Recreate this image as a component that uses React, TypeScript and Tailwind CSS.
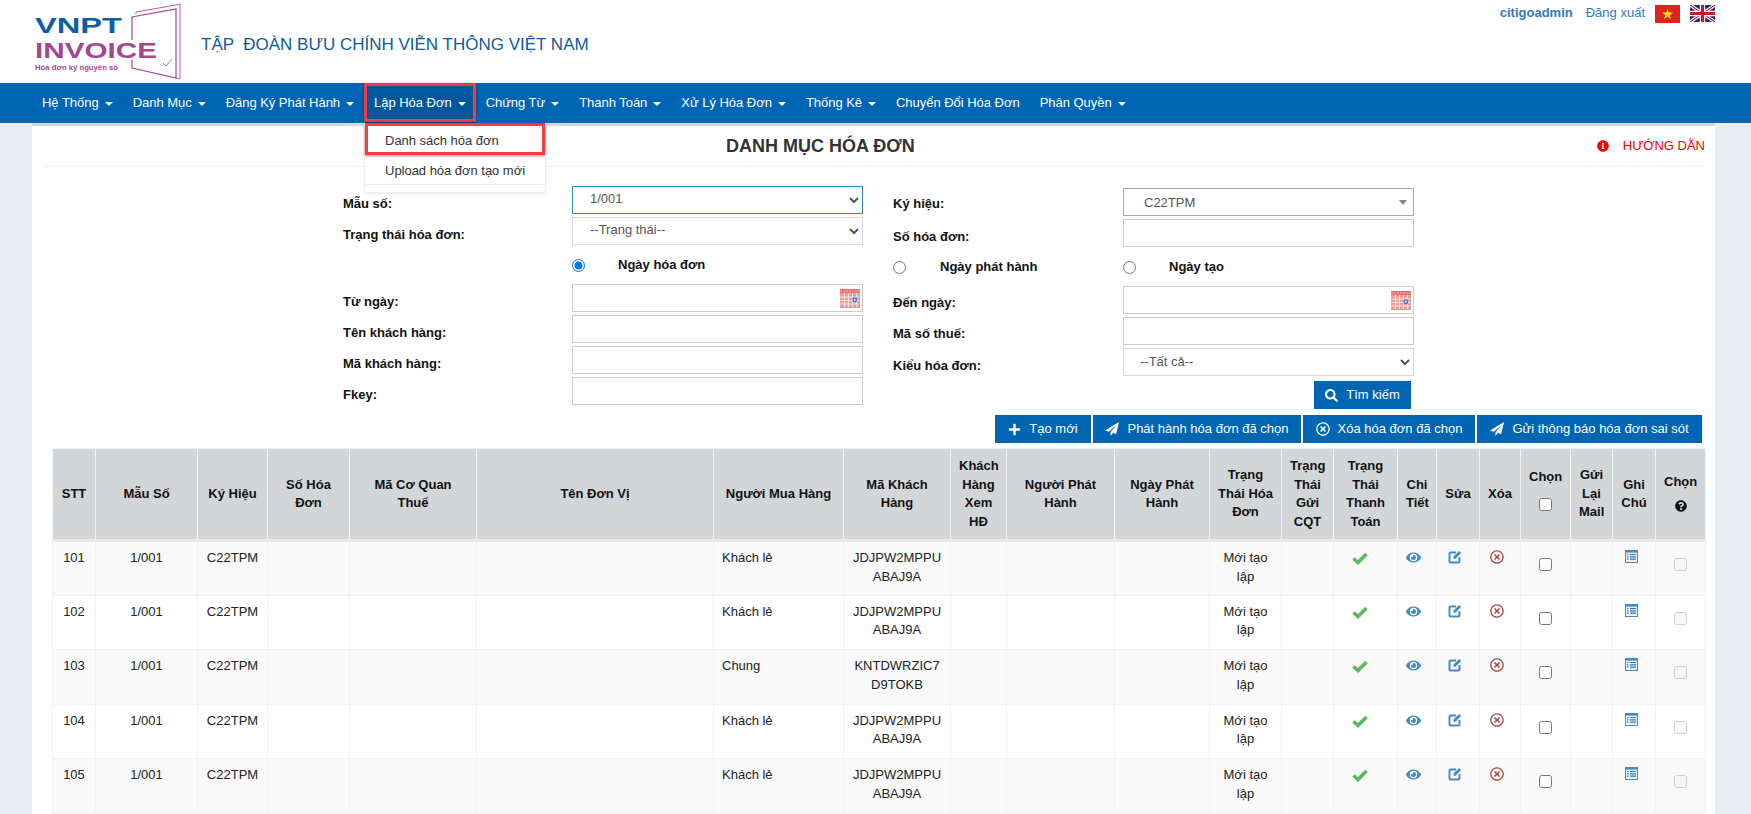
import { FaEye, FaInfoCircle, FaPlus, FaQuestionCircle, FaRegTimesCircle, FaSearch } from "react-icons/fa";

const menus = [
  { label: "Hệ Thống", caret: true },
  { label: "Danh Mục", caret: true },
  { label: "Đăng Ký Phát Hành", caret: true },
  { label: "Lập Hóa Đơn", caret: true, active: true },
  { label: "Chứng Từ", caret: true },
  { label: "Thanh Toán", caret: true },
  { label: "Xử Lý Hóa Đơn", caret: true },
  { label: "Thống Kê", caret: true },
  { label: "Chuyển Đổi Hóa Đơn", caret: false },
  { label: "Phân Quyền", caret: true },
];

const columns = [
  { w: "w-[43px]", label: "STT" },
  { w: "w-[102px]", label: "Mẫu Số" },
  { w: "w-[70px]", label: "Ký Hiệu" },
  { w: "w-[82px]", label: "Số Hóa Đơn" },
  { w: "w-[127px]", label: "Mã Cơ Quan Thuế" },
  { w: "w-[237px]", label: "Tên Đơn Vị" },
  { w: "w-[130px]", label: "Người Mua Hàng" },
  { w: "w-[107px]", label: "Mã Khách Hàng" },
  { w: "w-[56px]", label: "Khách Hàng Xem HĐ" },
  { w: "w-[108px]", label: "Người Phát Hành" },
  { w: "w-[95px]", label: "Ngày Phát Hành" },
  { w: "w-[72px]", label: "Trạng Thái Hóa Đơn" },
  { w: "w-[52px]", label: "Trạng Thái Gửi CQT" },
  { w: "w-[64px]", label: "Trạng Thái Thanh Toán" },
  { w: "w-[39px]", label: "Chi Tiết" },
  { w: "w-[43px]", label: "Sửa" },
  { w: "w-[41px]", label: "Xóa" },
  { w: "w-[50px]", label: "Chọn" },
  { w: "w-[42px]", label: "Gửi Lại Mail" },
  { w: "w-[43px]", label: "Ghi Chú" },
  { w: "w-[50px]", label: "Chọn" },
];

const rows = [
  { stt: 101, buyer: "Khách lẻ", code: "JDJPW2MPPUABAJ9A" },
  { stt: 102, buyer: "Khách lẻ", code: "JDJPW2MPPUABAJ9A" },
  { stt: 103, buyer: "Chung", code: "KNTDWRZIC7D9TOKB" },
  { stt: 104, buyer: "Khách lẻ", code: "JDJPW2MPPUABAJ9A" },
  { stt: 105, buyer: "Khách lẻ", code: "JDJPW2MPPUABAJ9A" },
];

function Logo() {
  return (
    <svg width="160" height="83" viewBox="0 0 160 83" className="ml-[30px] shrink-0">
      <g transform="translate(-30 0)">
        <polyline points="136,14 136,12 176,5 180,4 180,79 176,78" fill="none" stroke="#b0609f" strokeWidth="1" />
        <polyline points="132,40 132,17 176,9 176,78 132,68 132,60" fill="none" stroke="#a4478c" strokeWidth="1.2" />
        <path d="M163 63l3 3 6-7" fill="none" stroke="#3f8fd0" strokeWidth="0.9" />
        <text x="35" y="33" fontSize="22" fontWeight="700" fill="#0b5ea8" textLength="87" lengthAdjust="spacingAndGlyphs" fontFamily="Liberation Sans">VNPT</text>
        <text x="35" y="58" fontSize="22" fontWeight="700" fill="#a4478c" textLength="122" lengthAdjust="spacingAndGlyphs" fontFamily="Liberation Sans">INVOICE</text>
        <text x="35" y="70" fontSize="7.5" fontWeight="700" fill="#a4478c" textLength="83" lengthAdjust="spacingAndGlyphs" fontFamily="Liberation Sans">Hóa đơn kỳ nguyên số</text>
      </g>
    </svg>
  );
}

function FlagVn() {
  return (
    <svg width="25" height="18" viewBox="0 0 25 18">
      <rect width="25" height="18" fill="#e2201c" />
      <polygon points="12.5,3.5 13.9,7.6 18.2,7.6 14.7,10.2 16,14.3 12.5,11.8 9,14.3 10.3,10.2 6.8,7.6 11.1,7.6" fill="#ffe500" />
    </svg>
  );
}

function FlagUk() {
  return (
    <svg width="25" height="17" viewBox="0 0 25 17">
      <rect width="25" height="17" fill="#1f2a6b" />
      <path d="M0 0L25 17M25 0L0 17" stroke="#fff" strokeWidth="3.4" />
      <path d="M0 0L25 17M25 0L0 17" stroke="#cf142b" strokeWidth="1.1" />
      <path d="M12.5 0V17M0 8.5H25" stroke="#fff" strokeWidth="5.4" />
      <path d="M12.5 0V17M0 8.5H25" stroke="#cf142b" strokeWidth="3" />
    </svg>
  );
}

function CalendarIcon() {
  return (
    <svg width="20" height="19" viewBox="0 0 20 19" className="absolute right-[2px] top-[4px]">
      <rect width="20" height="19" fill="#f29a94" />
      <rect width="20" height="4" fill="#e0706a" />
      <path d="M1 1.5V3M4 1.5V3M7 1.5V3M10 1.5V3M13 1.5V3M16 1.5V3M19 1.5V3" stroke="#f7d5d2" strokeWidth="1" />
      <path d="M0 8H20M0 11.5H20M0 15H20M4.5 4V19M8.5 4V19M12.5 4V19M16.5 4V19" stroke="#fbe4e2" strokeWidth="1.2" />
      <rect x="12.5" y="8.5" width="4.5" height="4.5" fill="#4d7fd0" />
      <rect x="14" y="10" width="1.6" height="1.6" fill="#cfe0f7" />
      <path d="M0 18.5H20M19.5 4V19" stroke="#b7a9a6" strokeWidth="1" />
    </svg>
  );
}

function SendIcon() {
  return (
    <svg width="14" height="14" viewBox="0 0 14 14" fill="currentColor">
      <path d="M14 0L0 8.6l3.9 1.2L12.2 2.4 5.5 10.3v3.7l2.3-3 3.4 1z" />
    </svg>
  );
}

function CheckIcon() {
  return (
    <svg width="16" height="13" viewBox="0 0 16 13" className="ml-[10px] mt-[3px]">
      <path d="M1.5 6.5l4.5 4L14.5 2" fill="none" stroke="#5cb85c" strokeWidth="3.6" />
    </svg>
  );
}

function EditIcon() {
  return (
    <svg width="14" height="14" viewBox="0 0 14 14" className="ml-[3px] mt-[1px]">
      <path d="M8 2.5H2.5a1 1 0 0 0-1 1v8a1 1 0 0 0 1 1h8a1 1 0 0 0 1-1V7" fill="none" stroke="#428bca" strokeWidth="1.9" />
      <path d="M5.5 8.8V6.6l5.6-5.6 2 2-5.6 5.8z" fill="#428bca" />
    </svg>
  );
}

function ListIcon() {
  return (
    <svg width="13" height="13" viewBox="0 0 13 13" className="ml-[4px] mt-[1px]">
      <rect x="0.5" y="0.5" width="12" height="12" fill="#eaf3fa" stroke="#428bca" />
      <rect x="1" y="1" width="11" height="1.6" fill="#428bca" />
      <path d="M2 4.5H3.5M5 4.5H11M2 6.8H3.5M5 6.8H11M2 9.1H3.5M5 9.1H11" stroke="#2f77b5" strokeWidth="1.2" />
    </svg>
  );
}

function Field({ calendar }: { calendar?: boolean }) {
  return (
    <div className="relative h-[28px] w-[291px] border border-[#ccc] bg-white">
      {calendar && <CalendarIcon />}
    </div>
  );
}

function Select({ value, focused, className }: { value: string; focused?: boolean; className: string }) {
  return (
    <select
      defaultValue={value}
      className={`h-[28px] w-[291px] bg-white text-[13px] text-[#555] ${className} ${focused ? "border border-[#2f86bd]" : "border border-[#d2d6e2]"}`}
    >
      <option>{value}</option>
    </select>
  );
}

function Row({ label, className, children }: { label: string; className: string; children: React.ReactNode }) {
  return (
    <div className="flex h-[28px]">
      <label className={`shrink-0 font-bold text-[#111] ${className}`}>{label}</label>
      {children}
    </div>
  );
}

function ActionButton({ w, icon, label }: { w: string; icon: React.ReactNode; label: string }) {
  return (
    <button className={`flex h-[28px] items-center justify-center gap-[8px] bg-[#0065b3] text-white ${w}`}>
      {icon}
      {label}
    </button>
  );
}

export default function App() {
  return (
    <div className="h-screen overflow-hidden bg-[#e9edf2] font-['Liberation_Sans',Arial,sans-serif] text-[13px] leading-[18.57px] text-[#222]">
      <header className="flex h-[83px] bg-white">
        <Logo />
        <h1 className="mt-[35px] whitespace-pre pl-[11px] text-[17px] leading-[20px] text-[#0f5a9c]">TẬP  ĐOÀN BƯU CHÍNH VIỄN THÔNG VIỆT NAM</h1>
        <div className="ml-auto mr-[36px] mt-[5px] flex items-start text-[#337ab7]">
          <b className="mt-[-1px]">citigoadmin</b>
          <span className="ml-[13px] mt-[-1px]">Đăng xuất</span>
          <span className="ml-[10px]"><FlagVn /></span>
          <span className="ml-[10px]"><FlagUk /></span>
        </div>
      </header>

      <nav className="flex h-[40px] bg-[#0065b3] pl-[32px] tracking-[-0.03px] text-white">
        {menus.map((m) => (
          <div key={m.label} className={`relative flex items-center px-[10px] ${m.active ? "bg-[#00589c]" : ""}`}>
            {m.label}
            {m.caret && <span className="ml-[6px] mt-[2px] border-x-[4px] border-t-[4px] border-x-transparent border-t-white" />}
            {m.active && (
              <>
                <span className="absolute inset-0 bottom-[1px] border-[3px] border-[#ee3d45] shadow-[0_1px_3px_rgba(0,0,0,0.4)]" />
                <div className="absolute left-0 top-full z-10 h-[70px] w-[182px] rounded-b-[4px] border border-t-0 border-[#eee] bg-white text-[#333] shadow-[0_1px_2px_rgba(0,0,0,0.08)]">
                  <div className="flex h-[32px] items-center border-[3px] border-[#ee3d45] pl-[17px] pt-[4px] shadow-[0_1px_3px_rgba(0,0,0,0.4)]">Danh sách hóa đơn</div>
                  <div className="flex h-[30px] items-center border-b border-[#eee] pl-[20px] pt-[4px]">Upload hóa đơn tạo mới</div>
                </div>
              </>
            )}
          </div>
        ))}
      </nav>

      <main className="mr-[36px] ml-[32px] h-full border-t-[3px] border-[#d3d6da] bg-white px-[10px]">
        <div className="flex h-[41px] items-center border-b border-[#eee]">
          <h2 className="ml-[684px] text-[18px] font-bold text-[#333]">DANH MỤC HÓA ĐƠN</h2>
          <div className="ml-auto flex items-center gap-[14px] text-[#f00000]">
            <FaInfoCircle className="text-[12px]" />
            HƯỚNG DẪN
          </div>
        </div>

        <div className="mt-[19px] flex pl-[301px]">
          <div className="flex w-[520px] flex-col gap-[3px]">
            <Row label="Mẫu số:" className="w-[229px] pt-[9px]"><Select value="1/001" focused className="pb-[3px] pl-[13px]" /></Row>
            <Row label="Trạng thái hóa đơn:" className="w-[229px] pt-[9px]"><Select value="--Trạng thái--" className="pb-[3px] pl-[13px]" /></Row>
            <div className="flex h-[33px] items-center pl-[229px] pt-[1px]">
              <input type="radio" name="d" defaultChecked className="m-0" />
              <b className="ml-[33px] text-[#111]">Ngày hóa đơn</b>
            </div>
            <Row label="Từ ngày:" className="w-[229px] pt-[9px]"><Field calendar /></Row>
            <Row label="Tên khách hàng:" className="w-[229px] pt-[9px]"><Field /></Row>
            <Row label="Mã khách hàng:" className="w-[229px] pt-[9px]"><Field /></Row>
            <Row label="Fkey:" className="w-[229px] pt-[9px]"><Field /></Row>
          </div>
          <div className="ml-[30px] mt-[2px] flex w-[521px] flex-col gap-[3px]">
            <Row label="Ký hiệu:" className="w-[230px] pt-[7px]">
              <div className="relative flex h-[28px] w-[291px] items-center border border-[#aaa] bg-white pl-[20px] pt-[3px] text-[#555]">
                C22TPM
                <span className="absolute right-[6px] top-[11px] border-x-[4px] border-t-[5px] border-x-transparent border-t-[#888]" />
              </div>
            </Row>
            <Row label="Số hóa đơn:" className="w-[230px] pt-[9px]"><Field /></Row>
            <div className="flex h-[33px] items-center pt-[1px]">
              <input type="radio" name="d" className="m-0" />
              <b className="ml-[34px] w-[183px] text-[#111]">Ngày phát hành</b>
              <input type="radio" name="d" className="m-0" />
              <b className="ml-[33px] text-[#111]">Ngày tạo</b>
            </div>
            <Row label="Đến ngày:" className="w-[230px] pt-[8px]"><Field calendar /></Row>
            <Row label="Mã số thuế:" className="w-[230px] pt-[8px]"><Field /></Row>
            <Row label="Kiểu hóa đơn:" className="w-[230px] pt-[9px]"><Select value="--Tất cả--" className="pb-[1px] pl-[12px]" /></Row>
            <div className="mt-[2px] flex justify-end pr-[3px]">
              <ActionButton w="w-[97px]" icon={<FaSearch className="text-[13px]" />} label="Tìm kiếm" />
            </div>
          </div>
        </div>

        <div className="mr-[3px] mt-[6px] flex justify-end gap-[2px]">
          <ActionButton w="w-[96px]" icon={<FaPlus className="text-[13px]" />} label="Tạo mới" />
          <ActionButton w="w-[208px]" icon={<SendIcon />} label="Phát hành hóa đơn đã chọn" />
          <ActionButton w="w-[172px]" icon={<FaRegTimesCircle className="text-[14px]" />} label="Xóa hóa đơn đã chọn" />
          <ActionButton w="w-[225px]" icon={<SendIcon />} label="Gửi thông báo hóa đơn sai sót" />
        </div>

        <table className="ml-[10px] mt-[5px] w-[1653px] table-fixed border-collapse">
          <colgroup>
            {columns.map((c, i) => <col key={i} className={c.w} />)}
          </colgroup>
          <thead>
            <tr className="h-[91px] bg-[#d3d6d9] text-[#111]">
              {columns.map((c, i) => (
                <th key={i} className="border border-b-[3px] border-[#f2f2f2] border-b-[#e8e8e8] p-[8px] text-center align-middle font-bold">
                  {c.label}
                  {i === 17 && <div className="mb-[9px] mt-[12px] flex h-[13px] items-center justify-center"><input type="checkbox" className="m-0" /></div>}
                  {i === 20 && <div className="mb-[3px] mt-[8px] flex h-[13px] items-center justify-center"><FaQuestionCircle className="text-[12px]" /></div>}
                </th>
              ))}
            </tr>
          </thead>
          <tbody>
            {rows.map((r, idx) => (
              <tr key={r.stt} className={`h-[54.5px] ${idx % 2 === 0 ? "bg-[#f9f9f9]" : "bg-white"}`}>
                {[
                  r.stt,
                  "1/001",
                  "C22TPM",
                  "",
                  "",
                  "",
                  r.buyer,
                  r.code,
                  "",
                  "",
                  "",
                  "Mới tạo lập",
                  "",
                  <CheckIcon key="c" />,
                  <FaEye key="e" className="mt-[1px] text-[15px] text-[#428bca]" />,
                  <EditIcon key="s" />,
                  <FaRegTimesCircle key="x" className="ml-[2px] mt-[1px] text-[14px] text-[#a94442]" />,
                  <input key="k" type="checkbox" className="m-0 mt-[9px]" />,
                  "",
                  <ListIcon key="g" />,
                  <input key="d" type="checkbox" disabled className="m-0 mt-[9px]" />,
                ].map((cell, i) => (
                  <td key={i} className={`border border-[#f2f2f2] px-[8px] pb-[8px] pt-[7px] align-top ${i === 7 ? "break-all" : ""} ${i === 6 ? "text-left" : "text-center"}`}>{cell}</td>
                ))}
              </tr>
            ))}
          </tbody>
        </table>
      </main>
    </div>
  );
}
